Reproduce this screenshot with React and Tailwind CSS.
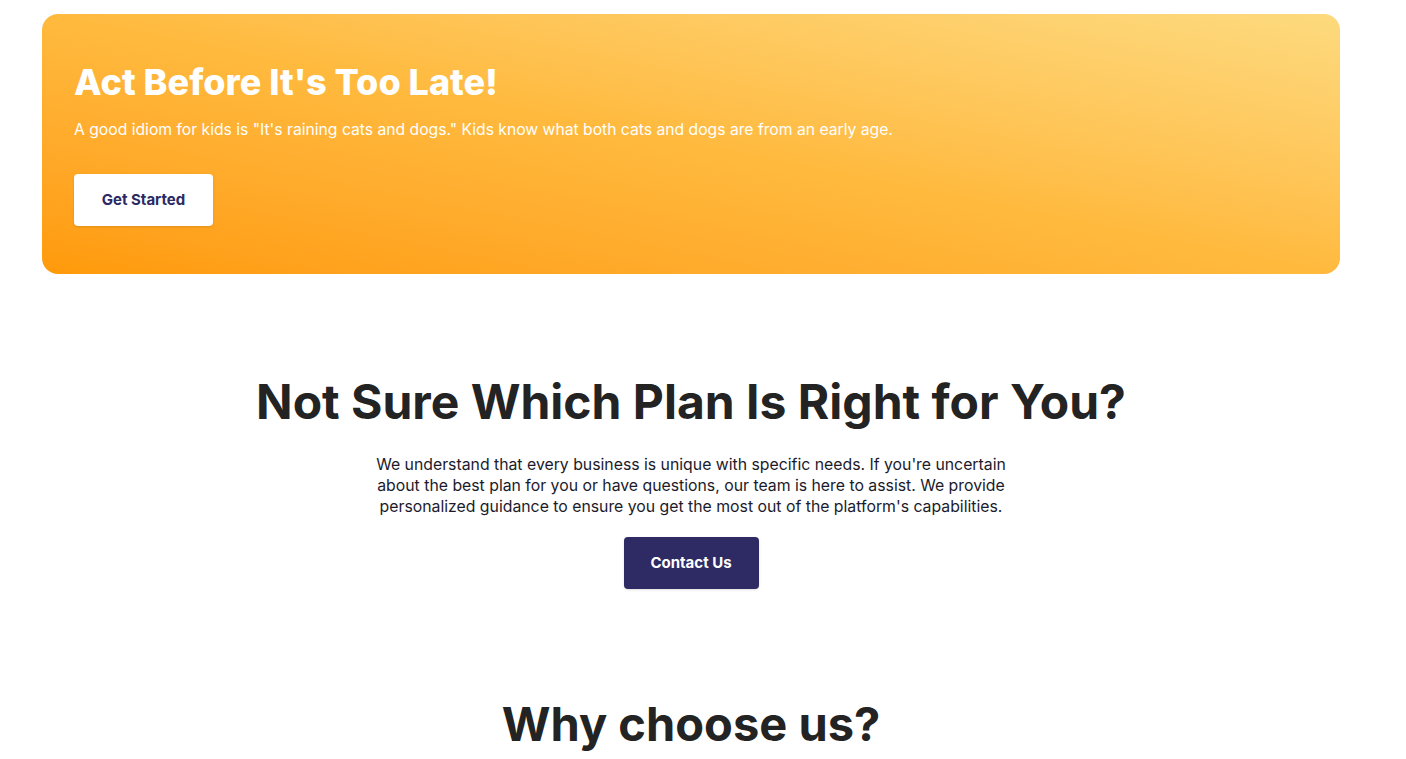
import React from "react";

const CtaBanner = () => (
  <div className="mx-[42px] mt-[14px] rounded-[16px] bg-gradient-to-tr from-[#ff9a08] via-[#ffba3e] to-[#fdda7e] px-[32px] pt-[46px] pb-[48px]">
    <h2 className="text-[36px] leading-[44px] font-extrabold text-white">
      Act Before It's Too Late!
    </h2>
    <p className="mt-[14px] text-[15.7px] leading-[24px] text-white">
      A good idiom for kids is "It's raining cats and dogs." Kids know what both cats and dogs are from an early age.
    </p>
    <button className="mt-[32px] h-[52px] w-[139px] rounded-[4px] bg-white text-[15px] font-bold text-[#2b2a63] shadow-sm">
      Get Started
    </button>
  </div>
);

const PlanHelp = () => (
  <section className="mt-[98px] flex flex-col items-center text-center">
    <h2 className="text-[48px] leading-[60px] font-bold text-[#232323]">
      Not Sure Which Plan Is Right for You?
    </h2>
    <p className="mt-[22px] max-w-[640px] text-[15.8px] leading-[21px] text-[#1b1b2b]">
      We understand that every business is unique with specific needs. If you're uncertain about the best plan for you or have questions, our team is here to assist. We provide personalized guidance to ensure you get the most out of the platform's capabilities.
    </p>
    <button className="mt-[20px] h-[52px] w-[135px] rounded-[4px] bg-[#2e2a64] text-[15px] font-bold text-white shadow-sm">
      Contact Us
    </button>
  </section>
);

export default function App() {
  return (
    <div className="w-[1382px] bg-white font-['Inter',sans-serif] pb-[40px]">
      <CtaBanner />
      <PlanHelp />
      <section className="mt-[105px] text-center">
        <h2 className="text-[47px] leading-[60px] font-bold text-[#232323]">
          Why choose us?
        </h2>
      </section>
    </div>
  );
}
